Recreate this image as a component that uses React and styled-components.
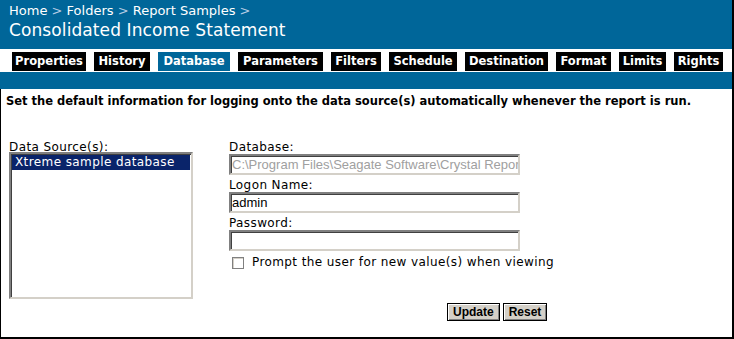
import styled, { createGlobalStyle } from "styled-components";

const BLUE = "#006699";

const GlobalStyle = createGlobalStyle`
    html, body {
        margin: 0;
        padding: 0;
        background: #fff;
    }
    * {
        box-sizing: border-box;
    }
`

const Page = styled.div`
    width: 734px;
    height: 339px;
    display: flex;
    flex-direction: column;
    border-right: 2px solid #000;
    font-family: "DejaVu Sans", Verdana, sans-serif;
    color: #000;
`

const Header = styled.div`
    height: 49px;
    background: ${BLUE};
    padding: 3px 9px 0;
    color: #fff;
`

const Crumbs = styled.div`
    font-size: 13px;
    line-height: 16px;
`

const Sep = styled.span`
    color: #b4cce4;
`

const Title = styled.div`
    font-size: 17px;
    line-height: 20px;
    margin-top: 1px;
    letter-spacing: 0.1px;
`

const TabStrip = styled.div`
    height: 23px;
    display: flex;
    gap: 8px;
    padding: 3px 0 0 12px;
    background: #fff;
`

const Tab = styled.div`
    width: ${p => p.$w}px;
    height: 19px;
    line-height: 19px;
    text-align: center;
    font-size: 11.5px;
    font-weight: bold;
    white-space: nowrap;
    color: #fff;
    background: ${p => (p.$active ? BLUE : "#000")};
`

const Band = styled.div`
    height: 17px;
    background: ${BLUE};
`

const Content = styled.div`
    flex: 1;
    border-left: 1px solid #000;
    border-bottom: 2px solid #000;
    padding: 5px 0 0 5px;
`

const Intro = styled.div`
    font-size: 11.5px;
    font-weight: bold;
    line-height: 15px;
`

const FormRow = styled.div`
    display: flex;
    margin-top: 31px;
    padding-left: 3px;
    letter-spacing: 0.4px;
`

const LeftCol = styled.div`
    width: 220px;
`

const RightCol = styled.div`
    display: flex;
    flex-direction: column;
    align-items: flex-start;
`

const Label = styled.div`
    font-size: 12px;
    line-height: 14px;
    height: 14px;
`

const ListBox = styled.div`
    width: 184px;
    height: 147px;
    margin-top: -2px;
    background: #fff;
    border: 2px solid;
    border-color: #808080 #d4d0c8 #d4d0c8 #808080;
    box-shadow: inset 1px 1px 0 #404040;
    padding: 1px;
`

const ListItem = styled.div`
    font-size: 12px;
    line-height: 15px;
    padding-left: 3px;
    color: ${p => (p.$selected ? "#fff" : "#000")};
    background: ${p => (p.$selected ? "#0a246a" : "transparent")};
`

const Field = styled.div`
    width: 291px;
    height: 21px;
    margin-bottom: 3px;
    border: 2px solid;
    border-color: #808080 #d4d0c8 #d4d0c8 #808080;
    box-shadow: inset 1px 1px 0 #404040;
    background: #fff;
    font-family: "Liberation Sans", Arial, sans-serif;
    font-size: 13px;
    letter-spacing: 0;
    line-height: 17px;
    padding-left: 1px;
    white-space: nowrap;
    overflow: hidden;
    color: ${p => (p.$disabled ? "#a0a0a0" : "#000")};
`

const CheckRow = styled.label`
    display: flex;
    align-items: center;
    gap: 8px;
    margin: 1px 0 0 3px;
    font-size: 12px;
    line-height: 15px;
`

const CheckBox = styled.span`
    width: 12px;
    height: 12px;
    border: 1px solid #808080;
    box-shadow: inset 1px 1px 0 #d4d0c8;
    background: #fff;
`

const Buttons = styled.div`
    display: flex;
    gap: 3px;
    margin: 33px 0 0 218px;
`

const Button = styled.button`
    height: 18px;
    padding: 0 5px;
    font-family: "Liberation Sans", Arial, sans-serif;
    font-size: 12px;
    font-weight: bold;
    letter-spacing: 0;
    color: #000;
    background: #d4d0c8;
    border: 1px solid #000;
    box-shadow: inset 1px 1px 0 #fff, inset -1px -1px 0 #808080;
    line-height: 14px;
`

const tabs = [
    ["Properties", 74],
    ["History", 56],
    ["Database", 72],
    ["Parameters", 85],
    ["Filters", 50],
    ["Schedule", 68],
    ["Destination", 83],
    ["Format", 55],
    ["Limits", 47],
    ["Rights", 49],
];

function App() {
    return (
        <>
            <GlobalStyle />
            <Page>
                <Header>
                    <Crumbs>
                        Home <Sep>&gt;</Sep> Folders <Sep>&gt;</Sep> Report Samples <Sep>&gt;</Sep>
                    </Crumbs>
                    <Title>Consolidated Income Statement</Title>
                </Header>
                <TabStrip>
                    {tabs.map(([name, w]) => (
                        <Tab key={name} $w={w} $active={name === "Database"}>{name}</Tab>
                    ))}
                </TabStrip>
                <Band />
                <Content>
                    <Intro>Set the default information for logging onto the data source(s) automatically whenever the report is run.</Intro>
                    <FormRow>
                        <LeftCol>
                            <Label>Data Source(s):</Label>
                            <ListBox>
                                <ListItem $selected>Xtreme sample database</ListItem>
                            </ListBox>
                        </LeftCol>
                        <RightCol>
                            <Label>Database:</Label>
                            <Field $disabled>C:\Program Files\Seagate Software\Crystal Reports\Samples\Databases\xtreme.mdb</Field>
                            <Label>Logon Name:</Label>
                            <Field>admin</Field>
                            <Label>Password:</Label>
                            <Field />
                            <CheckRow>
                                <CheckBox />
                                Prompt the user for new value(s) when viewing
                            </CheckRow>
                            <Buttons>
                                <Button>Update</Button>
                                <Button>Reset</Button>
                            </Buttons>
                        </RightCol>
                    </FormRow>
                </Content>
            </Page>
        </>
    );
}

export default App;
